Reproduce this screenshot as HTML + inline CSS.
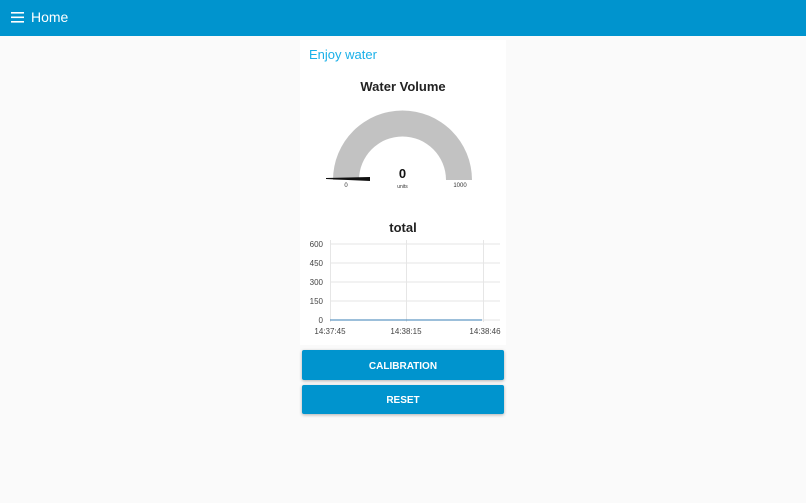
<html><head><style>
body{margin:0;width:806px;height:503px;background:#fafafa;font-family:"Liberation Sans",sans-serif;overflow:hidden;position:relative}
.top{position:absolute;left:0;top:0;width:806px;height:36px;background:#0094ce;color:#fff}
.card{position:absolute;left:300px;top:40px;width:206px;height:305px;background:#fff}
.btn{position:absolute;left:302px;width:202px;background:#0094ce;color:#fff;font-size:10px;font-weight:bold;text-align:center;box-shadow:0 1px 3px rgba(0,0,0,.3);border-radius:2px}
</style></head><body>
<div class="top">
<svg style="position:absolute;left:11px;top:12px" width="13" height="11"><rect y="0" width="13" height="1.6" fill="#fff"/><rect y="4.5" width="13" height="1.6" fill="#fff"/><rect y="9" width="13" height="1.6" fill="#fff"/></svg>
<div style="position:absolute;left:31px;top:9px;font-size:14px">Home</div>
</div>
<div class="card"></div>
<div style="position:absolute;left:309px;top:47px;font-size:13px;color:#1ab0e8">Enjoy water</div>
<div style="position:absolute;left:300px;width:206px;top:79px;text-align:center;font-size:13px;font-weight:bold;color:#222">Water Volume</div>
<svg style="position:absolute;left:300px;top:100px" width="206" height="245">
<path d="M33 80 A69.5 69.5 0 0 1 172 80 L146 80 A43.5 43.5 0 0 0 59 80 Z" fill="#c2c2c2"/>
<path d="M26 78 L70 77 L70 81 L26 79 Z" fill="#111"/>
<text x="102.5" y="78" text-anchor="middle" font-size="13" font-weight="bold" fill="#111">0</text>
<text x="102.5" y="88" text-anchor="middle" font-size="5" fill="#333">units</text>
<text x="46" y="87" text-anchor="middle" font-size="6" fill="#333">0</text>
<text x="160" y="87" text-anchor="middle" font-size="6" fill="#333">1000</text>
<text x="103" y="132" text-anchor="middle" font-size="13" font-weight="bold" fill="#222">total</text>
<g stroke="#e6e6e6" stroke-width="1">
<line x1="30" y1="144" x2="200" y2="144"/><line x1="30" y1="163" x2="200" y2="163"/><line x1="30" y1="182" x2="200" y2="182"/><line x1="30" y1="201" x2="200" y2="201"/><line x1="30" y1="220" x2="200" y2="220"/>
<line x1="30.5" y1="140" x2="30.5" y2="222"/><line x1="106.5" y1="140" x2="106.5" y2="222"/><line x1="183.5" y1="140" x2="183.5" y2="222"/>
</g>
<line x1="30" y1="220" x2="182" y2="220" stroke="#3a7fb5" stroke-width="1"/>
<g font-size="8" fill="#444" text-anchor="end">
<text x="23" y="147">600</text><text x="23" y="166">450</text><text x="23" y="185">300</text><text x="23" y="204">150</text><text x="23" y="223">0</text>
</g>
<g font-size="8" fill="#444" text-anchor="middle">
<text x="30" y="234">14:37:45</text><text x="106" y="234">14:38:15</text><text x="185" y="234">14:38:46</text>
</g>
</svg>
<div class="btn" style="top:350px;height:30px;line-height:33px">CALIBRATION</div>
<div class="btn" style="top:385px;height:29px;line-height:32px">RESET</div>
</body></html>
